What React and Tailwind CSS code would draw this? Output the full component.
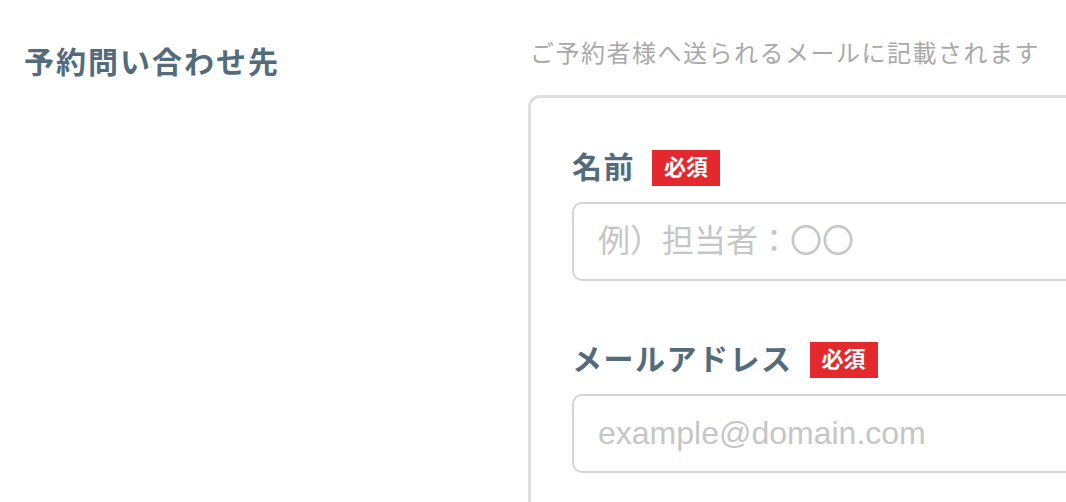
import React from 'react'

const jp = { fontFamily: '"Liberation Sans", "Noto Sans CJK JP", sans-serif' }

const Required = () => (
  <span className="flex items-center justify-center w-[68px] h-[36px] bg-[#e3292e] text-white text-[22px] font-bold leading-none">
    必須
  </span>
)

const Field = ({ label, placeholder, className = '' }) => (
  <div className={className}>
    <div className="flex items-center gap-[17px] h-[36px]">
      <span className="text-[30px] font-bold text-[#536b7b] leading-none tracking-[1.5px]">{label}</span>
      <Required />
    </div>
    <input
      type="text"
      placeholder={placeholder}
      className="mt-[16px] block w-full h-[79px] border-2 border-[#d2d6da] rounded-[10px] px-[24px] text-[32px] text-[#333] placeholder:text-[#c6c6c6] outline-none"
    />
  </div>
)

export default function App() {
  return (
    <div className="w-[1066px] h-[502px] overflow-hidden bg-white flex" style={jp}>
      {/* Left title */}
      <div className="w-[528px] shrink-0 pl-[24px] pt-[44px]">
        <h2 className="text-[30px] font-bold text-[#536b7b] leading-[38px] tracking-[2px]">予約問い合わせ先</h2>
      </div>

      {/* Right form */}
      <div className="flex-1 min-w-0 pt-[38px]">
        <p className="pl-[2px] text-[24px] text-[#a9a9a9] leading-[32px] tracking-[1.5px]">
          ご予約者様へ送られるメールに記載されます
        </p>
        <div className="mt-[25px] w-[720px] h-[480px] border-[3px] border-[#dedede] rounded-[12px] pt-[52px] pl-[41px] pr-[40px]">
          <Field label="名前" placeholder="例）担当者：〇〇" />
          <Field label="メールアドレス" placeholder="example@domain.com" className="mt-[61px]" />
        </div>
      </div>
    </div>
  )
}
